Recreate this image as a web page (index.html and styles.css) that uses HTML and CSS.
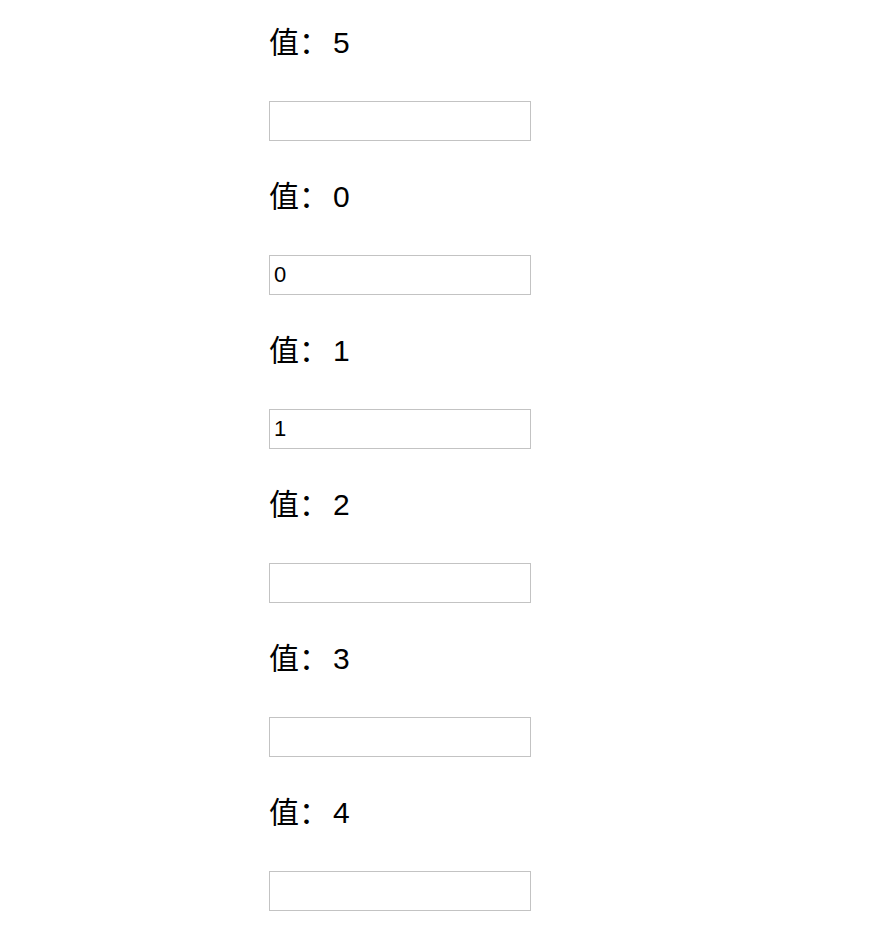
FILE: index.html
```html
<!DOCTYPE html>
<html lang="zh">
<head>
<meta charset="utf-8">
<link rel="stylesheet" href="styles.css">
</head>
<body>
<div class="list">
  <div class="item"><div class="label">值：<span class="num">5</span></div><input class="field" type="text" value=""></div>
  <div class="item"><div class="label">值：<span class="num">0</span></div><input class="field" type="text" value="0"></div>
  <div class="item"><div class="label">值：<span class="num">1</span></div><input class="field" type="text" value="1"></div>
  <div class="item"><div class="label">值：<span class="num">2</span></div><input class="field" type="text" value=""></div>
  <div class="item"><div class="label">值：<span class="num">3</span></div><input class="field" type="text" value=""></div>
  <div class="item"><div class="label">值：<span class="num">4</span></div><input class="field" type="text" value=""></div>
</div>
</body>
</html>
```
FILE: styles.css
```css
html, body {
  margin: 0;
  padding: 0;
  background: #fff;
}
body {
  font-family: "Liberation Sans", "Noto Sans CJK SC", sans-serif;
  color: #000;
}
.list {
  width: 348px;
  margin: 0 auto;
  padding-top: 23px;
  display: flex;
  flex-direction: column;
}
.item {
  display: flex;
  flex-direction: column;
  align-items: flex-start;
  margin-bottom: 36px;
}
.label {
  font-size: 30px;
  line-height: 40px;
  height: 40px;
  margin-bottom: 38px;
  white-space: nowrap;
}
.num {
  margin-left: 4px;
}
.field {
  box-sizing: border-box;
  width: 262px;
  height: 40px;
  margin: 0;
  padding: 0 4px;
  border: 1px solid #c3c3c3;
  border-radius: 0;
  outline: none;
  font-family: "Liberation Sans", sans-serif;
  font-size: 22px;
  color: #000;
  background: #fff;
}
```
